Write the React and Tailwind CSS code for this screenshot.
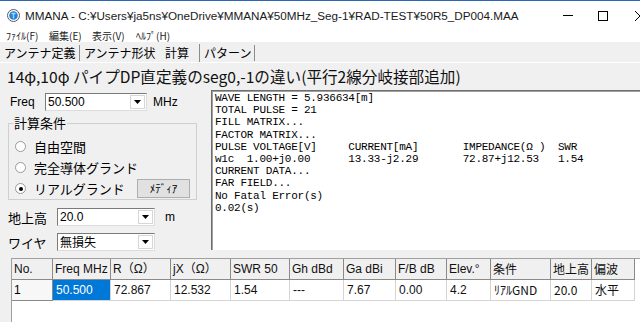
import React from "react";

const ui = { fontFamily: '"Liberation Sans", "Noto Sans CJK JP", sans-serif' };
const jp = { fontFamily: '"Noto Sans CJK JP", "Liberation Sans", sans-serif' };
const mono = { fontFamily: '"Liberation Mono", "DejaVu Sans Mono", monospace' };

const Combo = ({ value, className, jpText }) => (
  <div
    className={`flex h-[18px] items-stretch bg-white border border-t-[#7a7a7a] border-l-[#7a7a7a] border-b-[#dcdcdc] border-r-[#dcdcdc] ${className}`}
  >
    <div
      className="flex-1 pl-[2px] text-[12px] leading-[16px] text-black"
      style={jpText ? jp : ui}
    >
      {value}
    </div>
    <div className="my-[1px] mr-[1px] flex w-[15px] items-center justify-center border border-[#d6d6d6] bg-white">
      <svg width="7" height="4" viewBox="0 0 7 4">
        <path d="M0 0h7L3.5 4z" fill="#000" />
      </svg>
    </div>
  </div>
);

const Radio = ({ checked, label }) => (
  <div className="flex h-[21px] items-center pl-[6px]">
    <div className="flex h-[11px] w-[11px] items-center justify-center rounded-full border border-[#9a9a9a] bg-white">
      {checked && <div className="h-[4px] w-[4px] rounded-full bg-black" />}
    </div>
    <span className="ml-[8px] text-[13px] leading-none text-black" style={jp}>
      {label}
    </span>
  </div>
);

const headers = [
  "No.",
  "Freq MHz",
  "R（Ω）",
  "jX（Ω）",
  "SWR 50",
  "Gh dBd",
  "Ga dBi",
  "F/B dB",
  "Elev.°",
  "条件",
  "地上高",
  "偏波",
];

const row = [
  "1",
  "50.500",
  "72.867",
  "12.532",
  "1.54",
  "---",
  "7.67",
  "0.00",
  "4.2",
  "ﾘｱﾙGND",
  "20.0",
  "水平",
];

const log = [
  "WAVE LENGTH = 5.936634[m]",
  "TOTAL PULSE = 21",
  "FILL MATRIX...",
  "FACTOR MATRIX...",
  "PULSE VOLTAGE[V]     CURRENT[mA]       IMPEDANCE(Ω )  SWR",
  "w1c  1.00+j0.00      13.33-j2.29       72.87+j12.53   1.54",
  "CURRENT DATA...",
  "FAR FIELD...",
  "No Fatal Error(s)",
  "0.02(s)",
];

export default function App() {
  return (
    <div
      className="flex h-[322px] w-[640px] flex-col overflow-hidden bg-[#f0f0f0] text-black"
      style={ui}
    >
      {/* title bar */}
      <div className="flex h-[30px] flex-none items-center border-t border-[#2b68b4] bg-white">
        <div className="flex w-[563px] flex-none items-center pl-[7px]">
          <svg width="13" height="13" viewBox="0 0 13 13">
            <circle cx="6.5" cy="6.5" r="6" fill="#fff" stroke="#5a5a5a" />
            <circle cx="6.5" cy="6.5" r="4.3" fill="#2a7fd8" />
            <path d="M4.5 4.5h4M6.5 4.5v5" stroke="#8fe0ff" strokeWidth="1.4" />
          </svg>
          <span className="ml-[5px] text-[11.7px] leading-none text-[#1a1a1a]">
            MMANA - C:¥Users¥ja5ns¥OneDrive¥MMANA¥50MHz_Seg-1¥RAD-TEST¥50R5_DP004.MAA
          </span>
        </div>
        <div className="flex flex-none items-center">
          <div className="h-px w-[10px] bg-black" />
          <div className="ml-[25px] h-[10px] w-[10px] border border-black" />
          <svg className="ml-[27px]" width="10" height="10" viewBox="0 0 10 10">
            <path d="M0 0L10 10M10 0L0 10" stroke="#000" strokeWidth="1" />
          </svg>
        </div>
      </div>

      {/* menu bar */}
      <div
        className="flex h-[12px] flex-none items-center bg-white pl-[6px] text-[10px] leading-none text-[#222]"
        style={jp}
      >
        <span className="w-[43px]">ﾌｧｲﾙ(F)</span>
        <span className="w-[43px]">編集(E)</span>
        <span className="w-[44px]">表示(V)</span>
        <span>ﾍﾙﾌﾟ(H)</span>
      </div>

      {/* tabs */}
      <div
        className="flex h-[20px] flex-none items-center whitespace-nowrap pt-[1px] text-[12px] leading-none text-black"
        style={jp}
      >
        <div className="flex h-[16px] w-[80px] items-center border-r border-[#8c8c8c] pl-[4px]">
          アンテナ定義
        </div>
        <div className="flex h-[16px] w-[80px] items-center pl-[4px]">
          アンテナ形状
        </div>
        <div className="flex h-[18px] w-[40px] items-center border-r border-[#8c8c8c] pl-[5px]">
          計算
        </div>
        <div className="flex h-[16px] w-[55px] items-center border-r border-[#8c8c8c] pl-[4px]">
          パターン
        </div>
      </div>
      <div className="h-px flex-none bg-white" />

      {/* heading */}
      <div
        className="flex h-[27px] flex-none items-center whitespace-nowrap pl-[7px] text-[15.6px] leading-none text-[#111]"
        style={jp}
      >
        14φ,10φ パイプDP直定義のseg0,-1の違い(平行2線分岐接部追加)
      </div>

      {/* main area */}
      <div className="flex h-[160px] flex-none">
        <div className="flex w-[211px] flex-none flex-col">
          <div className="mt-[3px] flex items-center">
            <span className="w-[45px] pl-[10px] text-[12px] leading-none">Freq</span>
            <Combo value="50.500" className="w-[102px]" />
            <span className="ml-[6px] text-[12px] leading-none">MHz</span>
          </div>

          <div className="relative ml-[8px] mt-[12px] h-[77px] w-[189px] border border-[#cfcfcf] pt-[12px]">
            <span
              className="absolute left-[4px] top-[-9px] bg-[#f0f0f0] px-[1px] text-[13px] leading-[16px]"
              style={jp}
            >
              計算条件
            </span>
            <Radio label="自由空間" />
            <Radio label="完全導体グランド" />
            <div className="flex items-center pr-[6px]">
              <Radio checked label="リアルグランド" />
              <div
                className="ml-auto flex h-[19px] w-[53px] items-center justify-center border border-[#adadad] bg-[#e1e1e1] text-[11px] leading-none"
                style={jp}
              >
                ﾒﾃﾞｨｱ
              </div>
            </div>
          </div>

          <div className="mt-[8px] flex items-center">
            <span className="w-[57px] pl-[8px] text-[13px] leading-none" style={jp}>
              地上高
            </span>
            <Combo value="20.0" className="w-[98px]" />
            <span className="ml-[10px] text-[12px] leading-none">m</span>
          </div>
          <div className="mt-[7px] flex items-center">
            <span className="w-[57px] pl-[8px] text-[13px] leading-none" style={jp}>
              ワイヤ
            </span>
            <Combo value="無損失" jpText className="w-[98px]" />
          </div>
        </div>

        <div className="flex-1 border-l border-t border-[#6e6e6e] bg-white pl-[3px] pt-[1px] shadow-[inset_1px_1px_0_#a0a0a0]">
          {log.map((l, i) => (
            <div
              key={i}
              className="h-[12.2px] whitespace-pre text-[11px] leading-[12.2px] tracking-[-0.25px] text-black"
              style={mono}
            >
              {l}
            </div>
          ))}
        </div>
      </div>

      {/* result grid */}
      <div className="ml-[11px] mt-[8px] flex-1 border-l border-t border-[#a0a0a0] bg-white">
        <div className="grid grid-cols-[41px_58px_60px_60px_59px_54px_52px_51px_44px_60px_41px_43px]">
          {headers.map((h, i) => (
            <div
              key={h}
              className="flex h-[21px] items-center border-b border-r border-[#8a8a8a] bg-[#f0f0f0] pl-[2px] text-[12px] leading-none text-[#111]"
              style={i >= 9 ? jp : ui}
            >
              {h}
            </div>
          ))}
          {row.map((c, i) => (
            <div
              key={i}
              className={
                i === 0
                  ? "flex h-[21px] items-center border-b border-r border-[#8a8a8a] bg-[#f7f7f7] pl-[2px] text-[12px] leading-none"
                  : i === 1
                  ? "flex h-[21px] items-center border-b border-r border-[#d4d4d4] bg-[#0078d7] pl-[3px] text-[12px] leading-none text-white"
                  : "flex h-[21px] items-center border-b border-r border-[#d4d4d4] bg-white pl-[3px] text-[12px] leading-none text-[#111]"
              }
              style={i >= 9 ? jp : ui}
            >
              {c}
            </div>
          ))}
        </div>
      </div>
    </div>
  );
}
